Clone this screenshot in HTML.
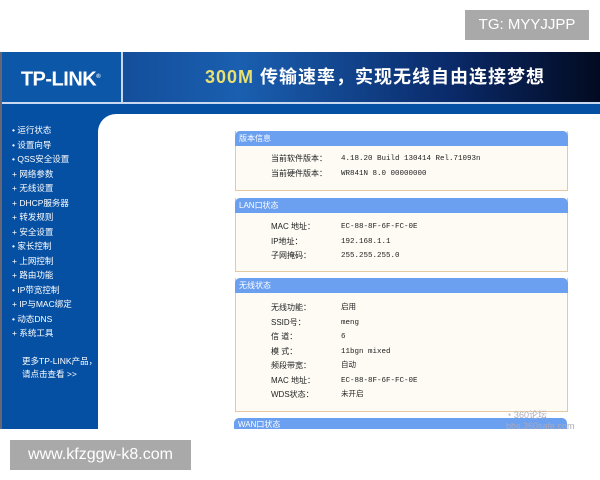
<!DOCTYPE html>
<html><head><meta charset="utf-8"><style>
body{margin:0;width:600px;height:480px;background:#fff;position:relative;overflow:hidden;font-family:"Liberation Sans","Noto Sans CJK SC",sans-serif;}
.abs{position:absolute}
.tag{background:#a9a9a9;color:#fff;font-size:15px;}
#hdr{left:0;top:52px;width:600px;height:50px;background:linear-gradient(90deg,#0c3d85 0,#1a5fb0 40%,#0a2a6a 75%,#020a20 100%);}
#logo{left:0;top:52px;width:121px;height:50px;background:#0d57a8;border-right:2px solid #c8d8f0;color:#fff;font-weight:bold;font-size:20px;line-height:50px;text-align:center;letter-spacing:-0.5px}
#slogan{left:205px;top:63px;color:#fff;font-size:18px;font-weight:bold;letter-spacing:1px}
#slogan b{color:#e8e070}
#strip{left:0;top:102px;width:600px;height:2px;background:#c8d8f0}
#band{left:0;top:104px;width:600px;height:325px;background:#0650a3}
#content{left:98px;top:114px;width:502px;height:315px;background:#fff;border-top-left-radius:18px}
#side{left:12px;top:123px;color:#fff;font-size:8.5px;line-height:14.5px}
.p{position:absolute;left:235px;width:331px;background:#fdfbf4;border:1px solid #e6c9a0;border-top:none}
.ph{background:#6b9ff0;color:#fff;font-size:8px;height:15px;line-height:15px;padding-left:4px;border-radius:5px 5px 0 0;margin:0 -1px}
.row{font-size:8px;line-height:14.5px;color:#222;position:relative;height:14.5px}
.row span{position:absolute;left:105px;font-family:"Liberation Mono",monospace;font-size:7.5px}
.row i{font-style:normal;position:absolute;left:35px}
</style></head><body>
<div class="abs tag" style="left:465px;top:10px;width:124px;height:30px;line-height:30px;text-align:center">TG: MYYJJPP</div>
<div class="abs" id="hdr"></div>
<div class="abs" id="logo">TP-LINK<sup style="font-size:6px">®</sup></div>
<div class="abs" id="slogan"><b>300M</b> 传输速率，实现无线自由连接梦想</div>
<div class="abs" id="strip"></div>
<div class="abs" id="band"></div>
<div class="abs" style="left:0;top:52px;width:2px;height:377px;background:#667"></div>
<div class="abs" id="content"></div>
<div class="abs" id="side">• 运行状态<br>• 设置向导<br>• QSS安全设置<br>+ 网络参数<br>+ 无线设置<br>+ DHCP服务器<br>+ 转发规则<br>+ 安全设置<br>• 家长控制<br>+ 上网控制<br>+ 路由功能<br>• IP带宽控制<br>+ IP与MAC绑定<br>• 动态DNS<br>+ 系统工具<br><div style="margin-top:14px;padding-left:10px;line-height:13px">更多TP-LINK产品，<br>请点击查看 &gt;&gt;</div></div>
<div class="p" style="top:131px;height:59px"><div class="ph">版本信息</div><div style="padding-top:6px">
<div class="row"><i>当前软件版本：</i><span>4.18.20 Build 130414 Rel.71093n</span></div>
<div class="row"><i>当前硬件版本：</i><span>WR841N 8.0 00000000</span></div></div></div>
<div class="p" style="top:198px;height:73px"><div class="ph">LAN口状态</div><div style="padding-top:7px">
<div class="row"><i>MAC 地址：</i><span>EC-88-8F-6F-FC-0E</span></div>
<div class="row"><i>IP地址：</i><span>192.168.1.1</span></div>
<div class="row"><i>子网掩码：</i><span>255.255.255.0</span></div></div></div>
<div class="p" style="top:278px;height:133px"><div class="ph">无线状态</div><div style="padding-top:8px">
<div class="row"><i>无线功能：</i><span>启用</span></div>
<div class="row"><i>SSID号：</i><span>meng</span></div>
<div class="row"><i>信 道：</i><span>6</span></div>
<div class="row"><i>模 式：</i><span>11bgn mixed</span></div>
<div class="row"><i>频段带宽：</i><span>自动</span></div>
<div class="row"><i>MAC 地址：</i><span>EC-88-8F-6F-FC-0E</span></div>
<div class="row"><i>WDS状态：</i><span>未开启</span></div></div></div>
<div class="p" style="top:418px;height:11px;border:none;background:none"><div class="ph" style="height:11px;line-height:13px">WAN口状态</div></div>
<div class="abs" style="left:506px;top:408px;color:#aab;font-size:9px">◔ 360论坛<br>bbs.360safe.com</div>
<div class="abs tag" style="left:10px;top:440px;width:181px;height:30px;line-height:30px;text-align:center;font-size:16px">www.kfzggw-k8.com</div>
</body></html>
